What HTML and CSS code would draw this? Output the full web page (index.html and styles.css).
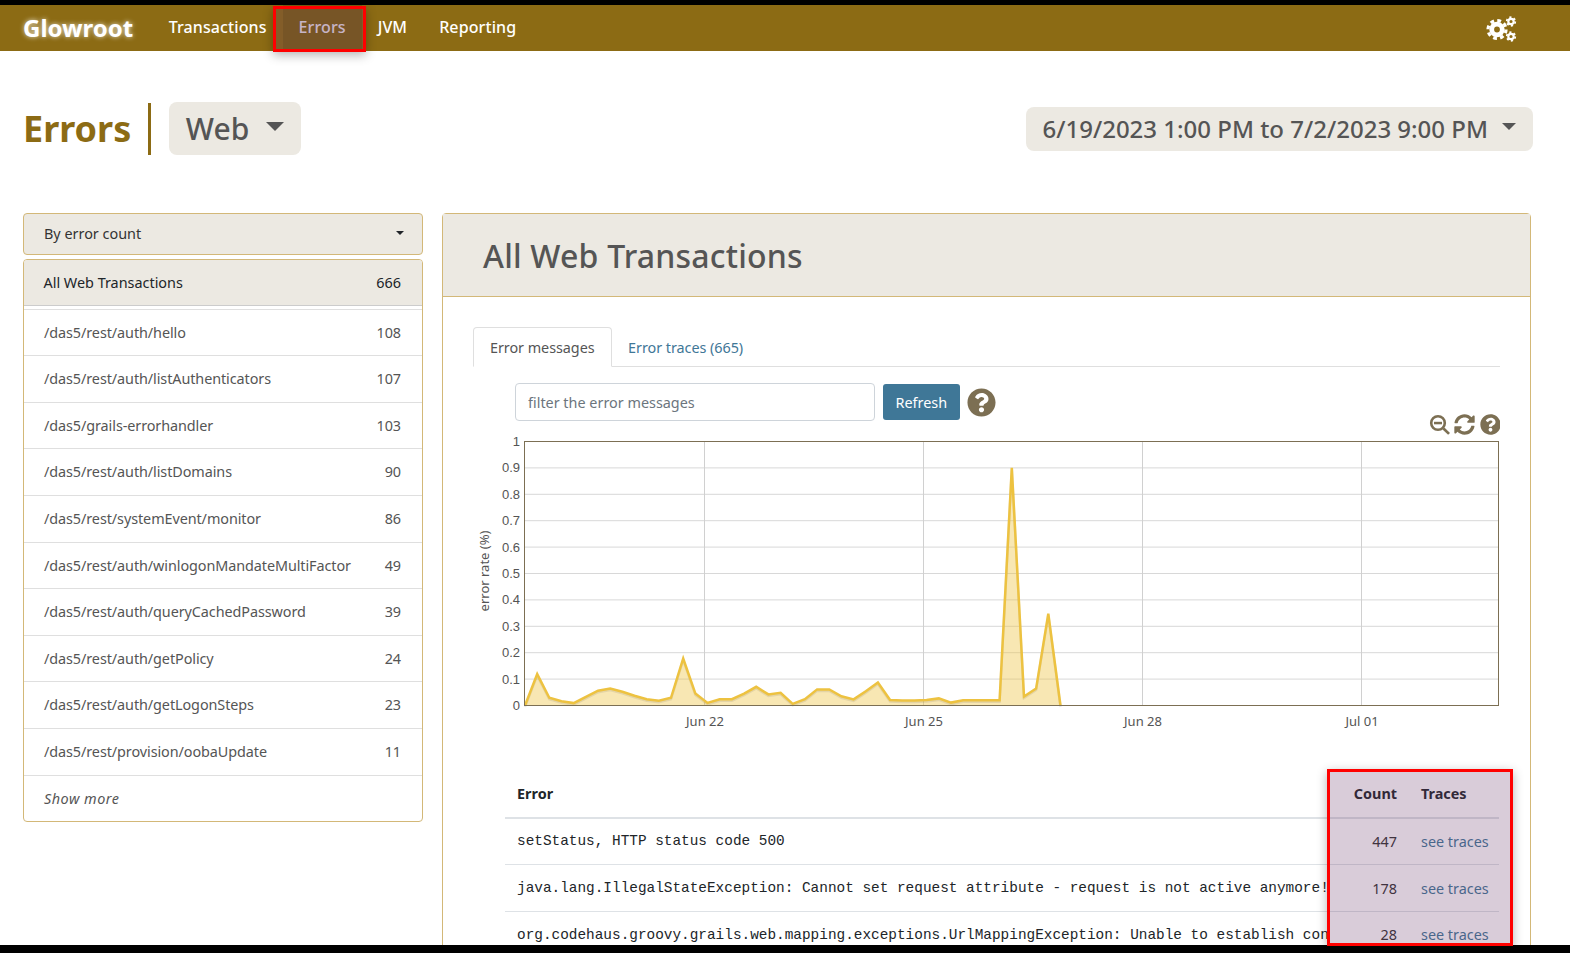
FILE: index.html
```html
<!DOCTYPE html>
<html lang="en">
<head>
  <meta charset="UTF-8" />
  <title>Glowroot - Errors</title>
  <link rel="stylesheet" href="styles.css">
</head>
<body>
  <div class="frame">
    <nav class="navbar">
      <a class="brand">Glowroot</a>
      <a class="nav-item">Transactions</a>
      <a class="nav-item active">Errors</a>
      <a class="nav-item">JVM</a>
      <a class="nav-item">Reporting</a>
      <svg class="cogs" viewBox="0 0 32 30" width="32" height="30">
        <circle cx="12" cy="15.5" r="5.3" class="cog-body" stroke-width="4.8"/>
        <circle cx="12" cy="15.5" r="9" class="cog-teeth" stroke-width="3.2" stroke-dasharray="3.8 3.27"/>
        <circle cx="26" cy="7.5" r="2.7" class="cog-body" stroke-width="2.2"/>
        <circle cx="26" cy="7.5" r="4.3" class="cog-teeth" stroke-width="1.7" stroke-dasharray="2.2 2.3"/>
        <circle cx="26" cy="22.5" r="2.7" class="cog-body" stroke-width="2.2"/>
        <circle cx="26" cy="22.5" r="4.3" class="cog-teeth" stroke-width="1.7" stroke-dasharray="2.2 2.3"/>
      </svg>
    </nav>

    <div class="content">
      <div class="page-header">
        <h1 class="page-title">Errors</h1>
        <div class="title-rule"></div>
        <button class="type-btn">Web<span class="caret caret-lg"></span></button>
        <button class="date-btn">6/19/2023 1:00 PM to 7/2/2023 9:00 PM<span class="caret caret-md"></span></button>
      </div>

      <div class="columns">
        <aside class="sidebar">
          <div class="sort-select">By error count<span class="caret caret-sm"></span></div>
          <div class="tx-list">
            <div class="tx-row tx-all"><span>All Web Transactions</span><span>666</span></div>
            <div class="tx-row tx-first"><span>/das5/rest/auth/hello</span><span>108</span></div>
            <div class="tx-row"><span>/das5/rest/auth/listAuthenticators</span><span>107</span></div>
            <div class="tx-row"><span>/das5/grails-errorhandler</span><span>103</span></div>
            <div class="tx-row"><span>/das5/rest/auth/listDomains</span><span>90</span></div>
            <div class="tx-row"><span>/das5/rest/systemEvent/monitor</span><span>86</span></div>
            <div class="tx-row"><span>/das5/rest/auth/winlogonMandateMultiFactor</span><span>49</span></div>
            <div class="tx-row"><span>/das5/rest/auth/queryCachedPassword</span><span>39</span></div>
            <div class="tx-row"><span>/das5/rest/auth/getPolicy</span><span>24</span></div>
            <div class="tx-row"><span>/das5/rest/auth/getLogonSteps</span><span>23</span></div>
            <div class="tx-row"><span>/das5/rest/provision/oobaUpdate</span><span>11</span></div>
            <div class="tx-row tx-more"><em>Show more</em></div>
          </div>
        </aside>

        <section class="panel">
          <div class="panel-head"><h2>All Web Transactions</h2></div>
          <div class="panel-body">
            <div class="tabs">
              <a class="tab active">Error messages</a>
              <a class="tab">Error traces (665)</a>
            </div>
            <div class="filter-row">
              <input class="filter-input" type="text" placeholder="filter the error messages" />
              <button class="refresh-btn">Refresh</button>
              <svg class="help-icon" viewBox="0 0 512 512" width="29" height="29"><path d="M504 256c0 136.997-111.043 248-248 248S8 392.997 8 256C8 119.083 119.043 8 256 8s248 111.083 248 248zM262.655 90c-54.497 0-89.255 22.957-116.549 63.758-3.536 5.286-2.353 12.415 2.715 16.258l34.699 26.31c5.205 3.947 12.621 3.008 16.665-2.122 17.864-22.658 30.113-35.797 57.303-35.797 20.429 0 45.698 13.148 45.698 32.958 0 14.976-12.363 22.667-32.534 33.976C247.128 238.528 216 254.941 216 296v4c0 6.627 5.373 12 12 12h56c6.627 0 12-5.373 12-12v-1.333c0-28.462 83.186-29.647 83.186-106.667 0-58.002-60.165-102-116.531-102zM256 338c-25.365 0-46 20.635-46 46 0 25.364 20.635 46 46 46s46-20.636 46-46c0-25.365-20.635-46-46-46z"/></svg>
            </div>

            <svg id="chart" class="chart" width="1027" height="331" viewBox="472 414 1027 331">
              <g id="chartGrid"></g>
              <g id="chartSeries"></g>
              <g id="chartLabels" class="chart-labels"></g>
              <g class="chart-tools">
                <svg x="1428" y="414" width="22" height="21" viewBox="0 0 22 21">
                  <circle cx="9" cy="9" r="6.8" fill="none" stroke="#7c6f53" stroke-width="2.6"/>
                  <rect x="5" y="7.8" width="8" height="2.5"/>
                  <path d="M13.5 15.4l1.9-1.9 5.6 5.4-1.9 1.9z"/>
                </svg>
                <svg x="1453" y="414" width="21" height="21" viewBox="0 0 512 512"><path d="M370.72 133.28C339.458 104.008 298.888 87.962 255.848 88c-77.458.068-144.328 53.178-162.791 126.85-1.344 5.363-6.122 9.15-11.651 9.15H24.103c-7.498 0-13.194-6.807-11.807-14.176C33.933 94.924 134.813 8 256 8c66.448 0 126.791 26.136 171.315 68.685L463.03 40.97C478.149 25.851 504 36.559 504 57.941V192c0 13.255-10.745 24-24 24H345.941c-21.382 0-32.09-25.851-16.971-40.971l41.75-41.749zM32 296h134.059c21.382 0 32.09 25.851 16.971 40.971l-41.75 41.75c31.262 29.273 71.835 45.319 114.876 45.28 77.418-.07 144.315-53.144 162.787-126.849 1.344-5.363 6.122-9.15 11.651-9.15h57.304c7.498 0 13.194 6.807 11.807 14.176C478.067 417.076 377.187 504 256 504c-66.448 0-126.791-26.136-171.315-68.685L48.97 471.03C33.851 486.149 8 475.441 8 454.059V320c0-13.255 10.745-24 24-24z"/></svg>
                <svg x="1479" y="414" width="21" height="21" viewBox="0 0 512 512"><path d="M504 256c0 136.997-111.043 248-248 248S8 392.997 8 256C8 119.083 119.043 8 256 8s248 111.083 248 248zM262.655 90c-54.497 0-89.255 22.957-116.549 63.758-3.536 5.286-2.353 12.415 2.715 16.258l34.699 26.31c5.205 3.947 12.621 3.008 16.665-2.122 17.864-22.658 30.113-35.797 57.303-35.797 20.429 0 45.698 13.148 45.698 32.958 0 14.976-12.363 22.667-32.534 33.976C247.128 238.528 216 254.941 216 296v4c0 6.627 5.373 12 12 12h56c6.627 0 12-5.373 12-12v-1.333c0-28.462 83.186-29.647 83.186-106.667 0-58.002-60.165-102-116.531-102zM256 338c-25.365 0-46 20.635-46 46 0 25.364 20.635 46 46 46s46-20.636 46-46c0-25.365-20.635-46-46-46z"/></svg>
              </g>
            </svg>

            <table class="error-table">
              <colgroup><col /><col class="col-count" /><col class="col-traces" /></colgroup>
              <thead>
                <tr><th class="col-error">Error</th><th class="num">Count</th><th>Traces</th></tr>
              </thead>
              <tbody>
                <tr><td class="msg">setStatus, HTTP status code 500</td><td class="num">447</td><td><a>see traces</a></td></tr>
                <tr><td class="msg">java.lang.IllegalStateException: Cannot set request attribute - request is not active anymore!</td><td class="num">178</td><td><a>see traces</a></td></tr>
                <tr><td class="msg">org.codehaus.groovy.grails.web.mapping.exceptions.UrlMappingException: Unable to establish connection</td><td class="num">28</td><td><a>see traces</a></td></tr>
              </tbody>
            </table>
          </div>
        </section>
      </div>
    </div>
  </div>

  <div class="mark mark-nav"></div>
  <div class="mark mark-table"></div>

  <script>
    const rates = [0, .119, .029, .016, .009, .033, .056, .064, .052, .037, .024, .018, .029, .178, .045, .01,
      .024, .024, .045, .071, .042, .048, .006, .024, .061, .061, .035, .023, .054, .087, .021, .019, .019,
      .021, .027, .011, .02, .02, .02, .02, .9, .034, .064, .348, 0];
    const plotLeft = 523.5, plotRight = 1498, plotTop = 441.5, plotBottom = 705.5;
    const NS = 'http://www.w3.org/2000/svg';

    function add(parentId, name, attrs, text) {
      const el = document.createElementNS(NS, name);
      Object.keys(attrs).forEach(k => el.setAttribute(k, attrs[k]));
      if (text) el.textContent = text;
      document.getElementById(parentId).appendChild(el);
    }

    for (let i = 0; i <= 10; i++) {
      const y = plotBottom - (plotBottom - plotTop) * i / 10;
      add('chartGrid', 'line', { x1: plotLeft, x2: plotRight, y1: y, y2: y, stroke: '#d8d8d8' });
      add('chartLabels', 'text', { x: 519, y: y + 4.5, 'text-anchor': 'end', class: 'y-tick' }, String(i / 10));
    }

    [[704, 'Jun 22'], [923, 'Jun 25'], [1142, 'Jun 28'], [1361, 'Jul 01']].forEach(t => {
      add('chartGrid', 'line', { x1: t[0] - .5, x2: t[0] - .5, y1: plotTop, y2: plotBottom, stroke: '#d0d0d0' });
      add('chartLabels', 'text', { x: t[0], y: 726, 'text-anchor': 'middle' }, t[1]);
    });

    add('chartLabels', 'text', { x: 488, y: 571, 'text-anchor': 'middle', transform: 'rotate(-90 488 571)' }, 'error rate (%)');

    const pts = rates.map((r, i) => (plotLeft + .5 + i * 12.17).toFixed(1) + ',' + (plotBottom - r * (plotBottom - plotTop)).toFixed(1));
    const shadow = rates.map((r, i) => (plotLeft + .5 + i * 12.17).toFixed(1) + ',' + (plotBottom + 1.5 - r * (plotBottom - plotTop)).toFixed(1));
    add('chartSeries', 'polygon', { points: pts.join(' '), fill: 'rgba(237,194,64,0.4)' });
    add('chartSeries', 'polyline', { points: shadow.join(' '), fill: 'none', stroke: 'rgba(0,0,0,0.08)', 'stroke-width': 2.5 });
    add('chartSeries', 'polyline', { points: pts.join(' '), fill: 'none', stroke: '#edc240', 'stroke-width': 2.5 });
    add('chartSeries', 'rect', { x: plotLeft, y: plotTop, width: plotRight - plotLeft - .5, height: plotBottom - plotTop, fill: 'none', stroke: '#7c6f53' });
  </script>
</body>
</html>
```

FILE: styles.css
```css
* {
  box-sizing: border-box;
}
html, body {
  margin: 0;
  height: 100%;
  overflow: hidden;
}
body {
  font-family: "Noto Sans", "Open Sans", sans-serif;
  font-size: 14.4px;
  line-height: 1.5;
  color: #555;
  background: #fff;
  position: relative;
}
h1, h2 {
  margin: 0;
}
.frame {
  height: 100%;
  border-top: 5px solid #000;
  border-bottom: 8px solid #000;
  overflow: hidden;
}

/* top bar */
.navbar {
  display: flex;
  align-items: center;
  height: 46px;
  padding: 0 23px;
  background: #8c6b14;
  color: #fff;
}
.brand {
  font-size: 24px;
  font-weight: 700;
  margin-right: 19.5px;
  text-shadow: 0 0 5px rgba(255,255,255,0.8);
}
.nav-item {
  padding: 0 16px;
  height: 46px;
  line-height: 44px;
  font-size: 16px;
  font-weight: 500;
  letter-spacing: 0.1px;
}
.nav-item.active {
  background: rgba(0,0,0,0.1);
  color: #e6dfe6;
}
.cogs {
  margin-left: auto;
  margin-right: 30px;
  margin-top: 1px;
}
.cog-body, .cog-teeth {
  fill: none;
  stroke: #fff;
}

/* page heading */
.content {
  padding: 51px 39px 0 23px;
}
.page-header {
  display: flex;
  align-items: center;
  height: 53px;
  margin-right: -2px;
}
.page-title {
  font-size: 36px;
  font-weight: 700;
  color: #8c6b14;
  line-height: 53px;
}
.title-rule {
  width: 3px;
  height: 52px;
  margin: 0 18px 0 17px;
  background: #8c6b14;
}
.type-btn, .date-btn {
  border: 0;
  border-radius: 8px;
  background: #ece9e2;
  color: #555;
  font-family: inherit;
  font-weight: 500;
  display: flex;
  align-items: center;
}
.type-btn {
  height: 53px;
  padding: 0 16.5px;
  font-size: 30px;
}
.date-btn {
  height: 44px;
  padding: 0 17px;
  margin-left: auto;
  font-size: 24px;
}
.caret {
  display: inline-block;
  width: 0;
  height: 0;
  border-left: solid transparent;
  border-right: solid transparent;
  border-top: solid #555;
}
.caret-lg {
  border-width: 9px 9px 0;
  margin: 0 0 5px 17px;
}
.caret-md {
  border-width: 7px 7px 0;
  margin: 0 0 4px 14px;
}
.caret-sm {
  border-width: 4px 4px 0;
  border-top-color: #212529;
  margin: 0 0 3px auto;
}

/* two columns */
.columns {
  display: flex;
  align-items: flex-start;
  gap: 19px;
  margin-top: 58px;
}
.sidebar {
  width: 400px;
  flex: none;
}
.sort-select {
  display: flex;
  align-items: center;
  height: 42px;
  padding: 0 18px 0 20px;
  border: 1px solid #d3b878;
  border-radius: 4px;
  background: #ece9e2;
  color: #333;
}
.tx-list {
  margin-top: 4px;
  border: 1px solid #d3b878;
  border-radius: 4px;
  overflow: hidden;
}
.tx-row {
  display: flex;
  justify-content: space-between;
  padding: 12px 21px 12px 20px;
  border-bottom: 1px solid #dfdfdf;
  letter-spacing: -0.08px;
}
.tx-all {
  background: #ece9e2;
  color: #212529;
  border-bottom-color: #ccc;
  height: 46px;
  padding-left: 19.5px;
  letter-spacing: 0;
}
.tx-first {
  margin-top: 3px;
  padding-top: 11.5px;
  border-top: 1px solid #dfdfdf;
}
.tx-more {
  border-bottom: 0;
  letter-spacing: 0.5px;
}

/* main panel */
.panel {
  flex: 1;
  min-width: 0;
  border: 1px solid #d3b878;
  border-radius: 4px;
  height: 900px;
}
.panel-head {
  height: 83px;
  padding: 2px 40px 0;
  display: flex;
  align-items: center;
  background: #ece9e2;
  border-bottom: 1px solid #d3b878;
}
.panel-head h2 {
  font-size: 32px;
  font-weight: 500;
  letter-spacing: 0.2px;
}
.panel-body {
  padding: 30px 30px 0;
}
.tabs {
  display: flex;
  height: 40px;
  border-bottom: 1px solid #dfdfdf;
  letter-spacing: -0.05px;
}
.tab {
  height: 40px;
  padding: 10px 17px 0 16.5px;
  color: #3f7797;
}
.tab.active {
  color: #555;
  background: #fff;
  border: 1px solid #dfdfdf;
  border-bottom-color: #fff;
  border-radius: 4px 4px 0 0;
  padding: 9px 16px 0;
}
.filter-row {
  display: flex;
  align-items: center;
  height: 38px;
  margin-top: 16px;
  padding-left: 42px;
}
.filter-input {
  width: 360px;
  height: 38px;
  padding: 0 12px;
  border: 1px solid #ced4da;
  border-radius: 4px;
  font-family: inherit;
  font-size: 14.4px;
}
.filter-input::placeholder {
  color: #6c757d;
}
.refresh-btn {
  height: 36px;
  margin-left: 8px;
  padding: 0 12.5px;
  border: 0;
  border-radius: 3px;
  background: #3f7797;
  color: #fff;
  font-family: inherit;
  font-size: 14.4px;
}
.help-icon {
  margin-left: 7px;
  fill: #7c6f53;
}
.chart {
  display: block;
  margin-top: -7px;
}
.chart-labels {
  font-size: 13px;
  fill: #545454;
}
.y-tick {
  font-family: "Liberation Sans", sans-serif;
  font-size: 13px;
}
.chart-tools {
  fill: #7c6f53;
}

/* errors table */
.error-table {
  width: 994px;
  margin: 26px 0 0 32px;
  border-collapse: collapse;
  table-layout: fixed;
}
.col-count {
  width: 80px;
}
.col-traces {
  width: 90px;
}
.error-table th {
  text-align: left;
  padding: 12px;
  color: #212529;
  font-weight: 700;
  border-bottom: 2px solid #dee2e6;
}
.error-table td {
  padding: 12.1px 12px;
  border-bottom: 1px solid #dee2e6;
  white-space: nowrap;
  color: #333;
}
.error-table .num {
  text-align: right;
}
.error-table a {
  color: #3f7797;
}
.error-table td.msg {
  font-family: "Liberation Mono", monospace;
  color: #212529;
  overflow: hidden;
  padding: 12.6px 0 11.6px 12px;
}

/* red annotation boxes drawn over the screenshot */
.mark {
  position: absolute;
  border: 3px solid #f00;
  background: rgba(103,51,103,0.25);
  box-shadow: 0 3px 10px rgba(0,0,0,0.3);
}
.mark-nav {
  left: 273px;
  top: 6px;
  width: 93px;
  height: 46px;
}
.mark-table {
  left: 1327px;
  top: 769px;
  width: 186px;
  height: 177px;
}
```
